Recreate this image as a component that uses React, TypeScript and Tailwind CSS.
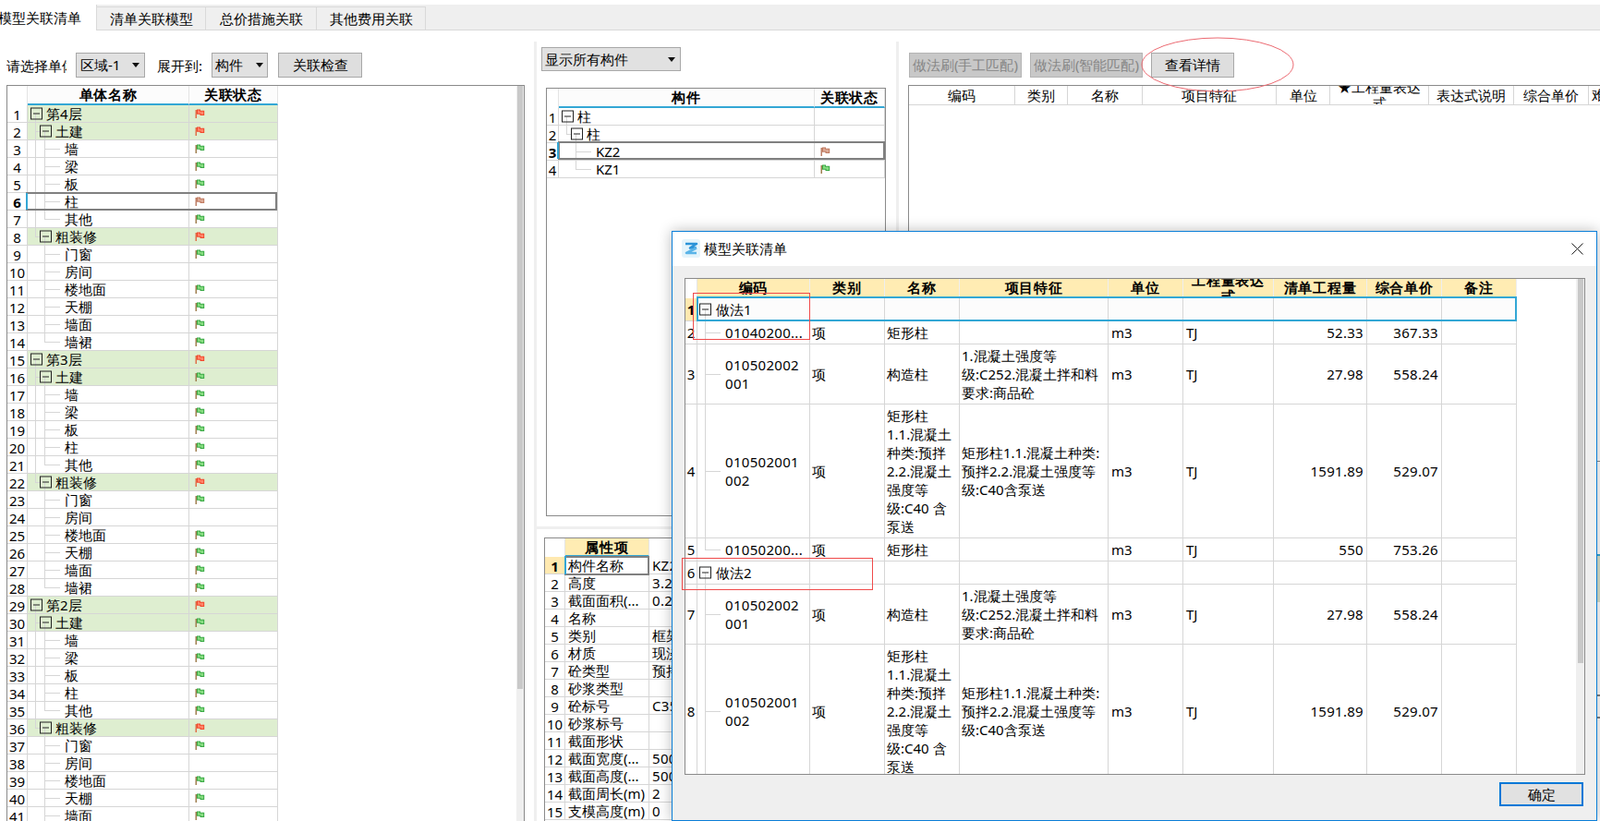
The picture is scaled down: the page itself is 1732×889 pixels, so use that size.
import React from "react";

type Status = "r" | "g" | "m" | null;
type VMode = "full" | "top" | "bottom" | null;

const vModeClass = (m: VMode) =>
  m === "full" ? "top-0 bottom-0" : m === "top" ? "top-0 h-1/2" : m === "bottom" ? "top-1/2 bottom-0" : "hidden";

function Flag({ s }: { s: Status }) {
  if (!s) return null;
  const fill = s === "r" ? "#ff8468" : s === "g" ? "#86dc80" : "#dba894";
  const edge = s === "r" ? "#f2472b" : s === "g" ? "#38a844" : "#c07a60";
  const pole = s === "g" ? "#a08050" : s === "r" ? "#e0704a" : "#bd8068";
  return (
    <svg width="11" height="11" viewBox="0 0 11 11" className="absolute left-[6px] top-[3px]">
      <rect x="0.5" y="2" width="1.5" height="9" fill={pole} />
      <path d="M2 1.5 H6 V2.8 H10.2 V8 H5.5 V6.8 H2 Z" fill={edge} />
      <path d="M3 2.5 H5 V3.8 H9.2 V7 H6.5 V5.8 H3 Z" fill={fill} />
    </svg>
  );
}

function Toggle({ className }: { className: string }) {
  return (
    <span className={"absolute top-1/2 h-[13px] w-[13px] -translate-y-1/2 border border-[#222222] " + className}>
      <span className="absolute left-[2px] top-[5px] h-px w-[7px] bg-[#222222]" />
    </span>
  );
}

function Tree({ level, v1, v2, label }: { level: number; v1: VMode; v2: VMode; label: string }) {
  return (
    <>
      <span className={"absolute left-[8px] w-px bg-[#d6d6d6] " + vModeClass(v1)} />
      <span className={"absolute left-[18px] w-px bg-[#d6d6d6] " + vModeClass(v2)} />
      {level === 1 && <span className="absolute left-[8px] top-1/2 h-px w-[5px] bg-[#d6d6d6]" />}
      {level === 2 && <span className="absolute left-[18px] top-1/2 h-px w-[17px] bg-[#d6d6d6]" />}
      {level === 0 && <Toggle className="left-[3px]" />}
      {level === 1 && <Toggle className="left-[13px]" />}
      <span
        className={
          "absolute top-0 whitespace-nowrap leading-[19px] " +
          (level === 0 ? "left-[20px]" : level === 1 ? "left-[30px]" : "left-[40px]")
        }
      >
        {label}
      </span>
    </>
  );
}

function Num({ n, w, active }: { n: number; w: string; active?: boolean }) {
  return (
    <div
      className={
        "shrink-0 border-r border-[#d6d6d6] text-center font-['Liberation_Serif',serif] leading-[20px] " +
        w +
        (active ? " font-bold" : "")
      }
    >
      {n}
    </div>
  );
}

type TRow = { n: number; label: string; level: number; s: Status; v1: VMode; v2: VMode; green: boolean };

function floor(start: number, name: string, f: Status, tj: Status, kids: Status[], zx: Status): TRow[] {
  const rows: TRow[] = [];
  let n = start;
  rows.push({ n: n++, label: name, level: 0, s: f, v1: "bottom", v2: null, green: true });
  rows.push({ n: n++, label: "土建", level: 1, s: tj, v1: "full", v2: "bottom", green: true });
  ["墙", "梁", "板", "柱", "其他"].forEach((t, i) =>
    rows.push({ n: n++, label: t, level: 2, s: kids[i], v1: "full", v2: i === 4 ? "top" : "full", green: false })
  );
  rows.push({ n: n++, label: "粗装修", level: 1, s: zx, v1: "top", v2: "bottom", green: true });
  const st: Status[] = ["g", null, "g", "g", "g", "g"];
  ["门窗", "房间", "楼地面", "天棚", "墙面", "墙裙"].forEach((t, i) =>
    rows.push({ n: n++, label: t, level: 2, s: st[i], v1: null, v2: i === 5 ? "top" : "full", green: false })
  );
  return rows;
}

const leftRows: TRow[] = [
  ...floor(1, "第4层", "r", "r", ["g", "g", "g", "m", "g"], "r"),
  ...floor(15, "第3层", "r", "g", ["g", "g", "g", "g", "g"], "r"),
  ...floor(29, "第2层", "r", "g", ["g", "g", "g", "g", "g"], "r"),
];

function LeftPane() {
  return (
    <>
      <div className="absolute left-[7px] top-[62px] h-[19px] w-[65px] overflow-hidden whitespace-nowrap leading-[19px]">请选择单体</div>
      <Select className="left-[82px] top-[57px] h-[27px] w-[75px]" text="区域-1" tx="left-[4px]" ax="left-[60px]" />
      <div className="absolute left-[170px] top-[62px] leading-[19px]">展开到:</div>
      <Select className="left-[229px] top-[57px] h-[27px] w-[61px]" text="构件" tx="left-[3px]" ax="left-[47px]" />
      <Btn className="left-[301px] top-[57px] w-[91px]" text="关联检查" />
      <div className="absolute left-[7px] top-[92px] h-[797px] w-[561px] overflow-hidden border-x border-t border-[#8a8a8a] bg-white">
        <div className="flex h-[21px]">
          <div className="w-[22px] shrink-0 border-r border-[#e4e4e4]" />
          <HeadCell w="w-[175px]" text="单体名称" />
          <HeadCell w="w-[96px]" text="关联状态" />
        </div>
        {leftRows.map((r) => (
          <div key={r.n} className="flex h-[19px] w-[293px] border-b border-[#d6d6d6]">
            <Num n={r.n} w="w-[22px]" active={r.n === 6} />
            <div className={"relative w-[175px] shrink-0 border-r border-[#d6d6d6] " + (r.green ? "bg-[#deeed0]" : "")}>
              <Tree level={r.level} v1={r.v1} v2={r.v2} label={r.label} />
            </div>
            <div className={"relative w-[96px] shrink-0 border-r border-[#d6d6d6] " + (r.green ? "bg-[#deeed0]" : "")}>
              <Flag s={r.s} />
            </div>
          </div>
        ))}
        <div className="absolute left-[20px] top-[115px] h-[20px] w-[272px] border-2 border-[#808080]" />
        <div className="absolute left-[20px] top-[116px] h-[18px] w-[2px] bg-[#33a7d5]" />
        <div className="absolute bottom-0 left-[551px] top-0 w-[8px] bg-[#efefef]" />
        <div className="absolute left-[552px] top-0 h-[653px] w-[6px] bg-[#c9c9c9]" />
      </div>
    </>
  );
}

function HeadCell({ w, text }: { w: string; text: string }) {
  return (
    <div className={"flex h-[21px] shrink-0 items-center justify-center border-r border-b-2 border-r-[#e4e4e4] border-b-[#33a7d5] bg-[#fcfcfc] font-bold tracking-[0.7px] " + w}>
      {text}
    </div>
  );
}

function Select({ className, text, tx, ax }: { className: string; text: string; tx: string; ax: string }) {
  return (
    <div className={"absolute border border-[#a8a8a8] bg-[#e1e1e1] " + className}>
      <span className={"absolute top-[3px] leading-[19px] " + tx}>{text}</span>
      <svg width="8" height="5" viewBox="0 0 8 5" className={"absolute top-[10px] " + ax}>
        <polygon points="0,0 8,0 4,5" fill="#111111" />
      </svg>
    </div>
  );
}

function Btn({ className, text, disabled }: { className: string; text: string; disabled?: boolean }) {
  return (
    <div
      className={
        "absolute flex h-[27px] items-center justify-center whitespace-nowrap border " +
        (disabled ? "border-[#b4b4b4] bg-[#c8c8c8] text-[#868686] " : "border-[#a8a8a8] bg-[#dedede] ") +
        className
      }
    >
      {text}
    </div>
  );
}

function MiddlePane() {
  const rows: TRow[] = [
    { n: 1, label: "柱", level: 0, s: null, v1: "bottom", v2: null, green: false },
    { n: 2, label: "柱", level: 1, s: null, v1: "top", v2: "bottom", green: false },
    { n: 3, label: "KZ2", level: 2, s: "m", v1: null, v2: "full", green: false },
    { n: 4, label: "KZ1", level: 2, s: "g", v1: null, v2: "top", green: false },
  ];
  const props: [string, string][] = [
    ["构件名称", "KZ2"], ["高度", "3.2"], ["截面面积(...", "0.2"], ["名称", ""], ["类别", "框架"],
    ["材质", "现浇"], ["砼类型", "预拌"], ["砂浆类型", ""], ["砼标号", "C35"], ["砂浆标号", ""],
    ["截面形状", ""], ["截面宽度(...", "500"], ["截面高度(...", "500"], ["截面周长(m)", "2"], ["支模高度(m)", "0"],
  ];
  return (
    <>
      <div className="absolute bottom-0 left-[578px] top-[45px] w-[3px] bg-[#efefef]" />
      <div className="absolute bottom-0 left-[970px] top-[45px] w-[3px] bg-[#efefef]" />
      <div className="absolute left-[580px] top-[570px] h-[3px] w-[390px] bg-[#efefef]" />
      <Select className="left-[586px] top-[51px] h-[26px] w-[151px]" text="显示所有构件" tx="left-[3px]" ax="left-[136px]" />
      <div className="absolute left-[591px] top-[95px] h-[464px] w-[368px] overflow-hidden border border-[#8a8a8a] bg-white">
        <div className="flex h-[21px]">
          <div className="w-[13px] shrink-0 border-r border-[#e4e4e4]" />
          <HeadCell w="w-[277px]" text="构件" />
          <HeadCell w="w-[76px]" text="关联状态" />
        </div>
        {rows.map((r) => (
          <div key={r.n} className="flex h-[19px] border-b border-[#d6d6d6]">
            <Num n={r.n} w="w-[13px]" active={r.n === 3} />
            <div className="relative w-[277px] shrink-0 border-r border-[#d6d6d6]">
              <Tree level={r.level} v1={r.v1} v2={r.v2} label={r.label} />
            </div>
            <div className="relative w-[76px] shrink-0 border-r border-[#d6d6d6]">
              <Flag s={r.s} />
            </div>
          </div>
        ))}
        <div className="absolute left-[12px] top-[57px] h-[20px] w-[354px] border-2 border-[#808080]" />
        <div className="absolute left-[11px] top-[58px] h-[18px] w-[2px] bg-[#33a7d5]" />
      </div>
      <div className="absolute left-[589px] top-[582px] h-[307px] w-[380px] overflow-hidden border-x border-t border-[#8a8a8a] bg-white">
        <div className="flex h-[20px]">
          <div className="w-[22px] shrink-0 border-r border-[#e4e4e4]" />
          <div className="flex w-[91px] shrink-0 items-center justify-center border-b-2 border-r border-b-[#33a7d5] border-r-[#e4e4e4] bg-[#ffecb3] font-bold tracking-[0.7px]">
            属性项
          </div>
        </div>
        {props.map((p, i) => (
          <div key={p[0]} className="flex h-[19px] border-b border-[#d6d6d6]">
            <div
              className={
                "w-[22px] shrink-0 border-r border-[#d6d6d6] text-center font-['Liberation_Serif',serif] leading-[20px] " +
                (i === 0 ? "bg-[#ffe9b0] font-bold" : "")
              }
            >
              {i + 1}
            </div>
            <div className="w-[91px] shrink-0 overflow-hidden whitespace-nowrap border-r border-[#d6d6d6] pl-[3px] leading-[19px]">{p[0]}</div>
            <div className="pl-[3px] tracking-[0.3px] leading-[19px]">{p[1]}</div>
          </div>
        ))}
        <div className="absolute left-[21px] top-[19px] h-[21px] w-[92px] border-2 border-[#808080]" />
        <div className="absolute left-[21px] top-[19px] h-[20px] w-[2px] bg-[#33a7d5]" />
      </div>
    </>
  );
}

function RightPane() {
  const cols: [string, React.ReactNode][] = [
    ["w-[115px]", "编码"],
    ["w-[57px]", "类别"],
    ["w-[81px]", "名称"],
    ["w-[145px]", "项目特征"],
    ["w-[58px]", "单位"],
    ["w-[107px]", <span className="block text-center leading-[17px]">★工程量表达<br />式</span>],
    ["w-[92px]", "表达式说明"],
    ["w-[81px]", "综合单价"],
  ];
  return (
    <>
      <Btn className="left-[984px] top-[57px] w-[122px]" text="做法刷(手工匹配)" disabled />
      <Btn className="left-[1115px] top-[57px] w-[122px]" text="做法刷(智能匹配)" disabled />
      <Btn className="left-[1246px] top-[57px] w-[90px]" text="查看详情" />
      <div className="absolute left-[983px] top-[92px] h-[797px] w-[749px] overflow-hidden border-l border-t border-[#8a8a8a] bg-white">
        <div className="flex h-[21px] border-b border-[#d6d6d6]">
          {cols.map((c, i) => (
            <div key={i} className={"flex shrink-0 items-center justify-center overflow-hidden border-r border-[#d6d6d6] " + c[0]}>
              {c[1]}
            </div>
          ))}
          <div className="whitespace-nowrap pl-[3px] leading-[19px]">难度</div>
        </div>
      </div>
      <svg className="absolute left-[1234px] top-[39px]" width="170" height="62" viewBox="0 0 170 62">
        <ellipse cx="84" cy="31" rx="82" ry="29" fill="none" stroke="#ec6a72" strokeWidth="1" />
      </svg>
    </>
  );
}

function Dialog() {
  const cols = ["w-[122px]", "w-[81px]", "w-[81px]", "w-[161px]", "w-[81px]", "w-[98px]", "w-[101px]", "w-[81px]", "w-[81px]"];
  const heads: React.ReactNode[] = [
    "编码", "类别", "名称", "项目特征", "单位",
    <span className="block text-center leading-[17px]">工程量表达<br />式</span>,
    "清单工程量", "综合单价", "备注",
  ];
  const nameA = <>矩形柱<br />1.1.混凝土<br />种类:预拌<br />2.2.混凝土<br />强度等<br />级:C40 含<br />泵送</>;
  const featA = <>矩形柱1.1.混凝土种类:<br />预拌2.2.混凝土强度等<br />级:C40含泵送</>;
  const featB = <>1.混凝土强度等<br />级:C252.混凝土拌和料<br />要求:商品砼</>;
  type D = {
    n: number; h: string; v: VMode; code?: React.ReactNode; group?: string; name?: React.ReactNode;
    feat?: React.ReactNode; qty?: string; price?: string;
  };
  const rows: D[] = [
    { n: 1, h: "h-[25px]", v: "bottom", group: "做法1" },
    { n: 2, h: "h-[25px]", v: "full", code: "01040200...", name: "矩形柱", qty: "52.33", price: "367.33" },
    { n: 3, h: "h-[65px]", v: "full", code: <>010502002<br />001</>, name: "构造柱", feat: featB, qty: "27.98", price: "558.24" },
    { n: 4, h: "h-[145px]", v: "full", code: <>010502001<br />002</>, name: nameA, feat: featA, qty: "1591.89", price: "529.07" },
    { n: 5, h: "h-[25px]", v: "top", code: "01050200...", name: "矩形柱", qty: "550", price: "753.26" },
    { n: 6, h: "h-[25px]", v: "bottom", group: "做法2" },
    { n: 7, h: "h-[65px]", v: "full", code: <>010502002<br />001</>, name: "构造柱", feat: featB, qty: "27.98", price: "558.24" },
    { n: 8, h: "h-[145px]", v: "full", code: <>010502001<br />002</>, name: nameA, feat: featA, qty: "1591.89", price: "529.07" },
  ];
  const cell = "flex shrink-0 items-center border-r border-[#d6d6d6] leading-[20px] ";
  return (
    <div className="absolute left-[727px] top-[250px] h-[639px] w-[1002px] border border-[#0a7ed8] bg-[#efefef] shadow-[0_0_14px_rgba(0,0,0,0.28)]">
      <div className="relative h-[37px] bg-white">
        <svg className="absolute left-[10px] top-[8px]" width="20" height="20" viewBox="0 0 20 20">
          <rect width="20" height="20" rx="3" fill="#e4f4fb" />
          <path d="M4 5 H16 L9 9.5 H16" fill="none" stroke="#2a93d8" strokeWidth="2.6" strokeLinejoin="round" />
          <path d="M16 9.5 L5 15 H16" fill="none" stroke="#5ab4e8" strokeWidth="2.6" strokeLinejoin="round" />
        </svg>
        <div className="absolute left-[34px] top-[9px] leading-[19px]">模型关联清单</div>
        <svg className="absolute left-[973px] top-[12px]" width="13" height="13" viewBox="0 0 13 13">
          <path d="M0.5 0.5 L12.5 12.5 M12.5 0.5 L0.5 12.5" stroke="#222222" strokeWidth="1" />
        </svg>
      </div>
      <div className="absolute left-[13px] top-[50px] h-[538px] w-[975px] overflow-hidden border border-[#8a8a8a] bg-white">
        <div className="flex h-[21px]">
          <div className="w-[13px] shrink-0 border-r border-[#e4e4e4]" />
          {cols.map((c, i) => (
            <div key={i} className={"flex shrink-0 items-center justify-center overflow-hidden border-r border-b-2 border-r-[#eeeeee] border-b-[#33a7d5] bg-[#ffecb3] font-bold tracking-[0.7px] " + c}>
              {heads[i]}
            </div>
          ))}
        </div>
        {rows.map((r) => (
          <div key={r.n} className={"flex border-b border-[#d6d6d6] " + r.h + " w-[900px]" + (r.n === 1 ? " bg-[#fcfcfc]" : "")}>
            <div
              className={
                "flex w-[13px] shrink-0 items-center justify-center border-r border-[#d6d6d6] font-['Liberation_Serif',serif] " +
                (r.n === 1 ? "bg-[#ffe9b0] font-bold" : "bg-white")
              }
            >
              {r.n}
            </div>
            <div className={"relative " + cell + cols[0]}>
              <span className={"absolute left-[8px] w-px bg-[#d6d6d6] " + vModeClass(r.v)} />
              {r.group ? (
                <>
                  <Toggle className="left-[2px]" />
                  <span className="absolute left-[20px] top-[3px] leading-[19px]">{r.group}</span>
                </>
              ) : (
                <>
                  <span className="absolute left-[8px] top-1/2 h-px w-[17px] bg-[#d6d6d6]" />
                  <span className="pl-[30px] tracking-[0.3px]">{r.code}</span>
                </>
              )}
            </div>
            <div className={cell + cols[1] + " pl-[2px]"}>{r.group ? "" : "项"}</div>
            <div className={cell + cols[2] + " pl-[2px] whitespace-nowrap"}>{r.name}</div>
            <div className={cell + cols[3] + " pl-[2px] whitespace-nowrap"}>{r.feat}</div>
            <div className={cell + cols[4] + " pl-[3px]"}>{r.group ? "" : "m3"}</div>
            <div className={cell + cols[5] + " pl-[3px]"}>{r.group ? "" : "TJ"}</div>
            <div className={cell + cols[6] + " justify-end pr-[3px] tracking-[0.3px]"}>{r.qty}</div>
            <div className={cell + cols[7] + " justify-end pr-[3px] tracking-[0.3px]"}>{r.price}</div>
            <div className={cell + cols[8]} />
          </div>
        ))}
        <div className="absolute left-[12px] top-[19px] h-[27px] w-[888px] border-2 border-[#33a7d5]" />
        <div className="absolute bottom-0 right-0 top-0 w-[9px] bg-[#efefef]" />
        <div className="absolute right-px top-0 h-[416px] w-[6px] bg-[#c8c8c8]" />
      </div>
      <div className="absolute left-[895px] top-[596px] flex h-[26px] w-[91px] items-center justify-center border-2 border-[#0078d7] bg-[#e1e1e1]">
        确定
      </div>
      <div className="absolute left-[22px] top-[66px] h-[51px] w-[127px] border border-[#f04a4a]" />
      <div className="absolute left-[10px] top-[353px] h-[35px] w-[207px] border border-[#f04a4a]" />
    </div>
  );
}

export default function App() {
  return (
    <div className="relative h-[889px] w-[1732px] overflow-hidden bg-white font-['Open_Sans','Noto_Sans_CJK_SC',sans-serif] text-[15px] text-black">
      <div className="absolute left-0 top-[5px] h-[28px] w-full border-b border-[#d9d9d9] bg-[#efefef]">
        <div className="absolute left-0 top-0 flex h-[28px] w-[105px] items-center justify-end overflow-hidden border-r border-[#d9d9d9] bg-white pr-[16px] whitespace-nowrap">
          模型关联清单
        </div>
        {[
          ["left-[105px] w-[118px]", "清单关联模型"],
          ["left-[223px] w-[120px]", "总价措施关联"],
          ["left-[343px] w-[118px]", "其他费用关联"],
        ].map((t) => (
          <div key={t[1]} className={"absolute top-[2px] flex h-[25px] items-center justify-center whitespace-nowrap border-r border-t border-[#d9d9d9] " + t[0]}>
            {t[1]}
          </div>
        ))}
      </div>
      <LeftPane />
      <MiddlePane />
      <RightPane />
      <div className="absolute left-[1729px] top-[499px] h-px w-[3px] bg-[#8a8a8a]" />
      <div className="absolute left-[1729px] top-[600px] h-[2px] w-[3px] bg-[#33a7d5]" />
      <div className="absolute left-[1729px] top-[602px] h-[50px] w-[3px] bg-[#d8e2cc]" />
      <div className="absolute left-[1729px] top-[752px] h-[2px] w-[3px] bg-[#808080]" />
      <div className="absolute left-[1729px] top-[776px] h-[2px] w-[3px] bg-[#808080]" />
      <Dialog />
    </div>
  );
}
